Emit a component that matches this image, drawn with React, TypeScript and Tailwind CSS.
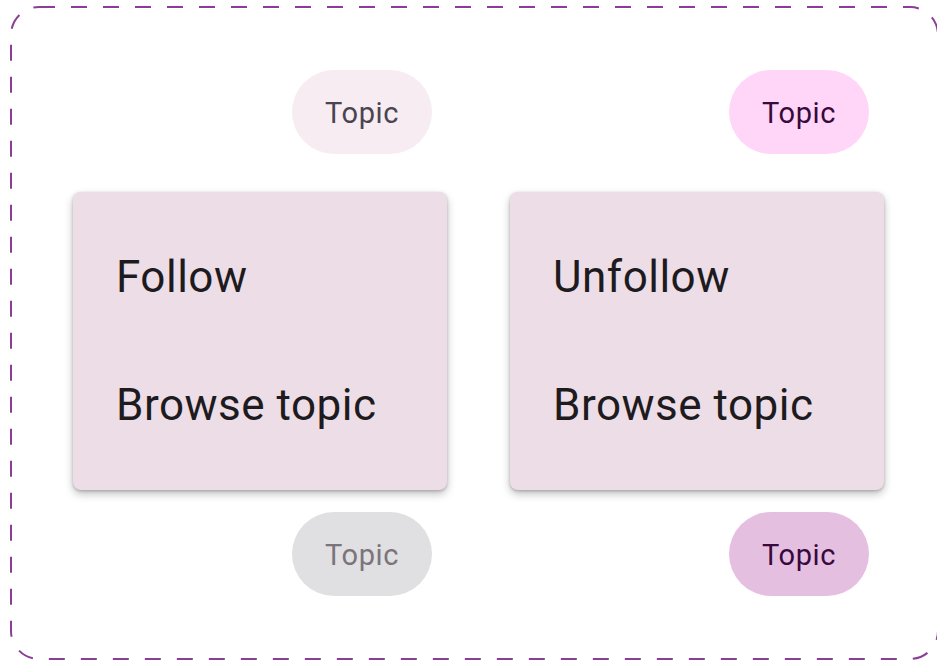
const chipBase =
  'flex h-[84px] w-[140px] items-center justify-center rounded-full pt-[4px] text-[29px] tracking-[0.6px]';

const Chip = ({ className }: { className: string }) => (
  <div className={`${chipBase} ${className} mr-[15px] self-end`}>Topic</div>
);

const Menu = ({ first }: { first: string }) => (
  <div className="flex w-[374px] flex-col rounded-lg bg-[#eddde6] py-[21px] shadow-[0_4px_8px_rgba(0,0,0,0.25),0_1px_3px_rgba(0,0,0,0.2)]">
    {[first, 'Browse topic'].map((label) => (
      <div
        key={label}
        className="flex h-[128px] items-center pl-[43px] text-[44px] tracking-[0.5px] text-[#1d1b20]"
      >
        {label}
      </div>
    ))}
  </div>
);

export default function App() {
  return (
    <div
      className="relative h-[661px] w-[937px] overflow-hidden bg-white"
      style={{ fontFamily: 'Roboto, "Noto Sans", sans-serif' }}
    >
      <svg className="pointer-events-none absolute inset-0" width="937" height="661">
        <rect
          x="11"
          y="7"
          width="927"
          height="652"
          rx="28"
          fill="none"
          stroke="#8c3d95"
          strokeWidth="2"
          strokeDasharray="16 16"
        />
      </svg>

      <div className="flex gap-[63px] pl-[73px] pt-[70px]">
        <div className="flex flex-col">
          <Chip className="bg-[#f6ecf1] text-[#4a4450]" />
          <div className="mt-[38px]">
            <Menu first="Follow" />
          </div>
          <div className="mt-[22px] flex flex-col">
            <Chip className="bg-[#e0dfe1] text-[#7b747c]" />
          </div>
        </div>

        <div className="flex flex-col">
          <Chip className="bg-[#ffd6f8] text-[#37093d]" />
          <div className="mt-[38px]">
            <Menu first="Unfollow" />
          </div>
          <div className="mt-[22px] flex flex-col">
            <Chip className="bg-[#e5bfe0] text-[#37093d]" />
          </div>
        </div>
      </div>
    </div>
  );
}
